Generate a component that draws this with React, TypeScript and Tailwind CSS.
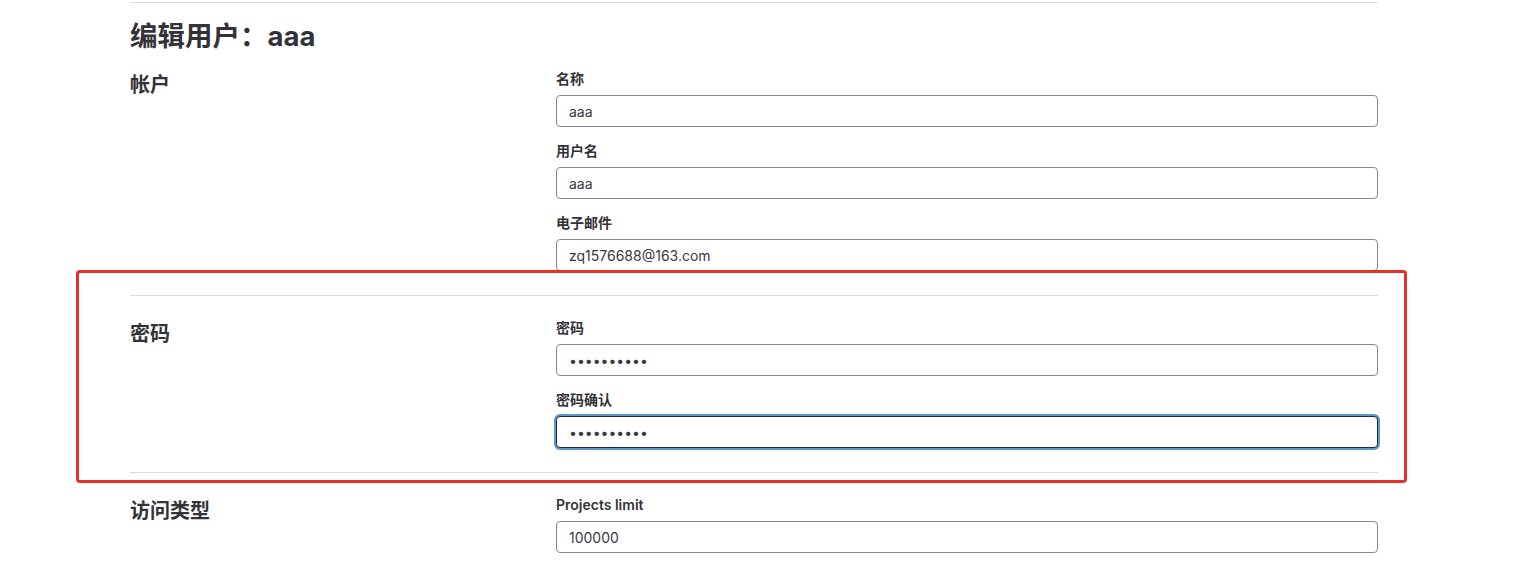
import React from 'react';

const font = { fontFamily: 'Inter, "Noto Sans CJK SC", sans-serif' };

const Field = ({ label, value, type = 'text', focused = false }: any) => (
    <div className="mb-4 last:mb-0">
        <label className="block text-sm font-semibold leading-4 mb-2 text-[#333238]">{label}</label>
        <input
            type={type}
            defaultValue={value}
            readOnly
            className={
                focused
                    ? 'block w-full h-8 px-3 text-sm text-[#3a383f] bg-white rounded-[4px] border border-[#28272d] shadow-[0_0_0_2px_#5e95cf] outline-none'
                    : 'block w-full h-8 px-3 text-sm text-[#3a383f] bg-white rounded-[4px] border border-[#89888d] outline-none'
            }
            style={font}
        />
    </div>
);

const Section = ({ title, children, last = false }: any) => (
    <div className={last ? 'grid grid-cols-[426px_1fr] pt-6' : 'grid grid-cols-[426px_1fr] pt-6 pb-6 border-b border-[#dcdcde]'}>
        <h4 className="pt-[2px] text-xl font-bold leading-6 text-[#333238]">{title}</h4>
        <div>{children}</div>
    </div>
);

export default function App() {
    return (
        <div className="relative w-[1524px] h-[561px] overflow-hidden bg-white" style={font}>
            <div className="ml-[130px] w-[1248px] mt-[2px] border-t border-[#dcdcde]">
                <h2 className="pt-4 text-[27.5px] font-bold leading-[34px] text-[#333238] mb-[3px]">编辑用户：aaa</h2>
                <div className="-mt-[9px]">
                    <Section title="帐户">
                        <Field label="名称" value="aaa" />
                        <Field label="用户名" value="aaa" />
                        <Field label="电子邮件" value="zq1576688@163.com" />
                    </Section>
                    <Section title="密码">
                        <Field label="密码" value="aaaaaaaaaa" type="password" />
                        <Field label="密码确认" value="aaaaaaaaaa" type="password" focused />
                    </Section>
                    <Section title="访问类型" last>
                        <Field label="Projects limit" value="100000" />
                    </Section>
                </div>
            </div>
            <div className="absolute left-[76px] top-[270px] w-[1331px] h-[213px] border-[3px] border-[#e8302a] rounded-[4px] pointer-events-none" />
        </div>
    );
}
